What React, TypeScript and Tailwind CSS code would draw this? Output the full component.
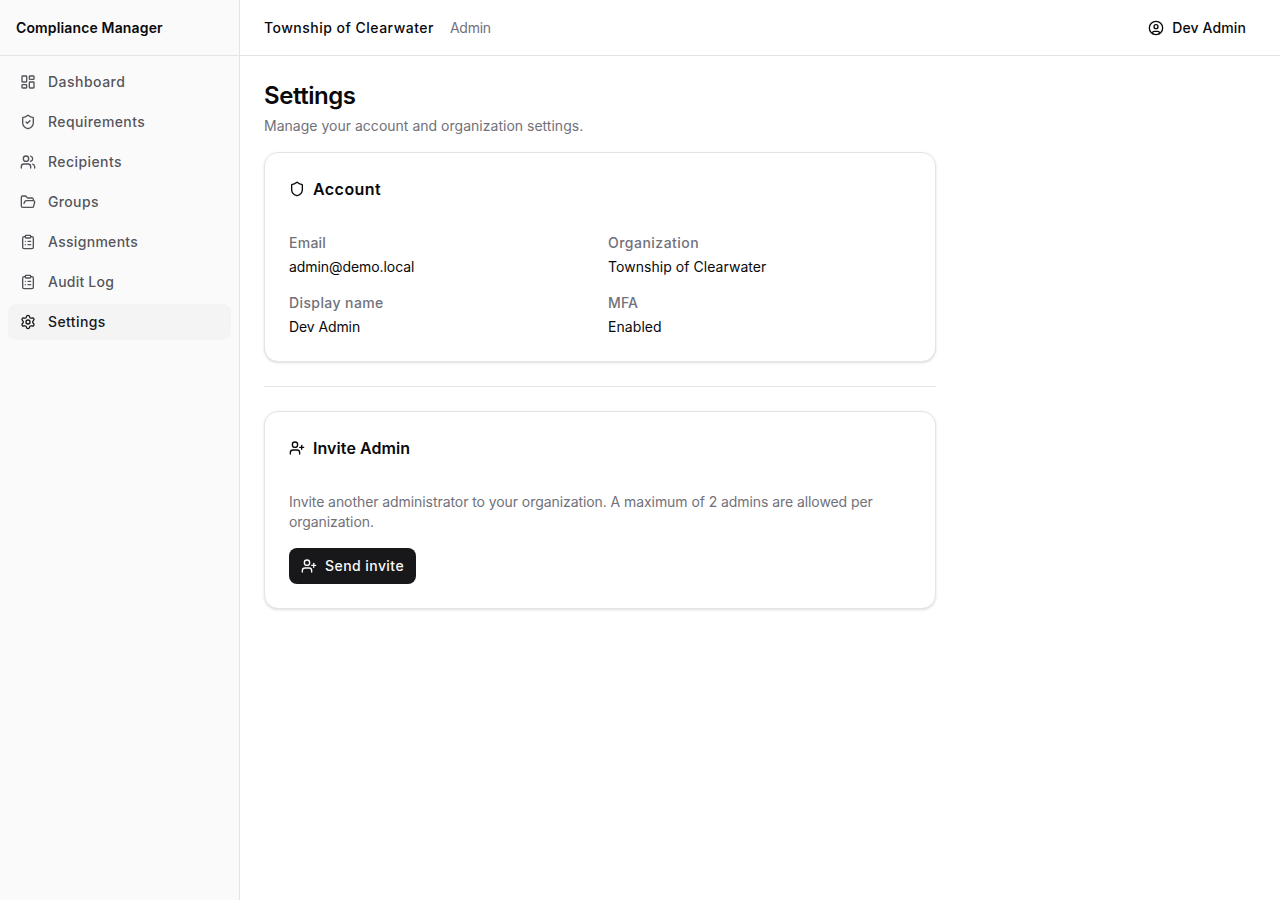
import type { ReactNode } from 'react'
import {
  CircleUser,
  ClipboardList,
  FolderOpen,
  LayoutDashboard,
  Settings,
  Shield,
  ShieldCheck,
  UserPlus,
  Users,
} from 'lucide-react'

const links = [
  { label: 'Dashboard', icon: LayoutDashboard, tracking: 'tracking-[0.48px]' },
  { label: 'Requirements', icon: ShieldCheck, tracking: 'tracking-[0.4px]' },
  { label: 'Recipients', icon: Users, tracking: 'tracking-[0.42px]' },
  { label: 'Groups', icon: FolderOpen, tracking: 'tracking-[0.35px]' },
  { label: 'Assignments', icon: ClipboardList, tracking: 'tracking-[0.3px]' },
  { label: 'Audit Log', icon: ClipboardList, tracking: 'tracking-[0.22px]' },
  { label: 'Settings', icon: Settings, tracking: 'tracking-[0.4px]' },
]

const account = [
  { label: 'Email', value: 'admin@demo.local', tracking: 'tracking-[0.25px]', valueTracking: 'tracking-[-0.07px]' },
  { label: 'Organization', value: 'Township of Clearwater', tracking: 'tracking-[0.48px]', valueTracking: 'tracking-[0.05px]' },
  { label: 'Display name', value: 'Dev Admin', tracking: 'tracking-[0.4px]', valueTracking: 'tracking-[-0.1px]' },
  { label: 'MFA', value: 'Enabled', tracking: 'tracking-[0.15px]', valueTracking: 'tracking-[0.07px]' },
]

function Sidebar({ active }: { active: string }) {
  return (
    <aside className="flex w-60 shrink-0 flex-col border-r border-[#e4e4e7] bg-[#fafafa]">
      <div className="flex h-14 shrink-0 items-center border-b border-[#e4e4e7] px-4">
        <span className="text-sm font-semibold tracking-[0.14px]">Compliance Manager</span>
      </div>
      <nav className="flex-1 space-y-1 p-2">
        {links.map((link) => (
          <a
            key={link.label}
            href="#"
            className={`flex h-9 items-center gap-3 rounded-lg px-3 text-sm font-medium ${link.tracking} ${
              link.label === active ? 'bg-[#f4f4f5] text-[#18181b]' : 'text-[#3f3f46]/90'
            }`}
          >
            <link.icon className="size-4" />
            {link.label}
          </a>
        ))}
      </nav>
    </aside>
  )
}

function Card({ icon, title, children }: { icon: ReactNode; title: ReactNode; children: ReactNode }) {
  return (
    <section className="rounded-[14px] border border-[#e4e4e7] bg-white shadow-sm">
      <div className="p-6">
        <h2 className="flex items-center gap-2 text-base font-semibold">
          {icon}
          {title}
        </h2>
      </div>
      <div className="px-6 pt-2 pb-6">{children}</div>
    </section>
  )
}

export default function App() {
  return (
    <div className="flex h-screen bg-white font-['Inter',sans-serif] text-[#09090b]">
      <Sidebar active="Settings" />
      <div className="flex flex-1 flex-col">
        <header className="flex h-14 shrink-0 items-center justify-between border-b border-[#e4e4e7] px-6">
          <div className="flex items-center gap-4 text-sm">
            <span className="font-medium tracking-[0.49px]">Township of Clearwater</span>
            <span className="tracking-[-0.25px] text-[#71717a]">Admin</span>
          </div>
          <button className="flex h-8 items-center gap-2 px-2.5 text-sm font-medium tracking-[0.12px]">
            <CircleUser className="size-4" />
            Dev Admin
          </button>
        </header>

        <main className="flex-1 p-6">
          <div className="max-w-2xl">
            <h1 className="text-2xl font-semibold tracking-[-0.46px]">Settings</h1>
            <p className="mt-1 text-sm tracking-[0.015px] text-[#71717a]">
              Manage your account and organization settings.
            </p>

            <div className="mt-4 space-y-6">
              <Card
                icon={<Shield className="size-4" />}
                title={<span className="tracking-[0.45px]">Account</span>}
              >
                <dl className="grid grid-cols-2 gap-4 text-sm">
                  {account.map((item) => (
                    <div key={item.label}>
                      <dt className={`font-medium text-[#71717a] ${item.tracking}`}>{item.label}</dt>
                      <dd className={`mt-1 ${item.valueTracking}`}>{item.value}</dd>
                    </div>
                  ))}
                </dl>
              </Card>

              <hr className="border-[#e4e4e7]" />

              <Card
                icon={<UserPlus className="size-4" />}
                title={<span className="tracking-[0.08px]">Invite Admin</span>}
              >
                <p className="text-sm tracking-[-0.072px] text-[#71717a]">
                  Invite another administrator to your organization. A maximum of 2 admins are allowed per organization.
                </p>
                <button className="mt-4 flex h-9 items-center gap-2 rounded-lg bg-[#18181b] px-3 text-sm font-medium tracking-[0.44px] text-[#fafafa]">
                  <UserPlus className="size-4" />
                  Send invite
                </button>
              </Card>
            </div>
          </div>
        </main>
      </div>
    </div>
  )
}
